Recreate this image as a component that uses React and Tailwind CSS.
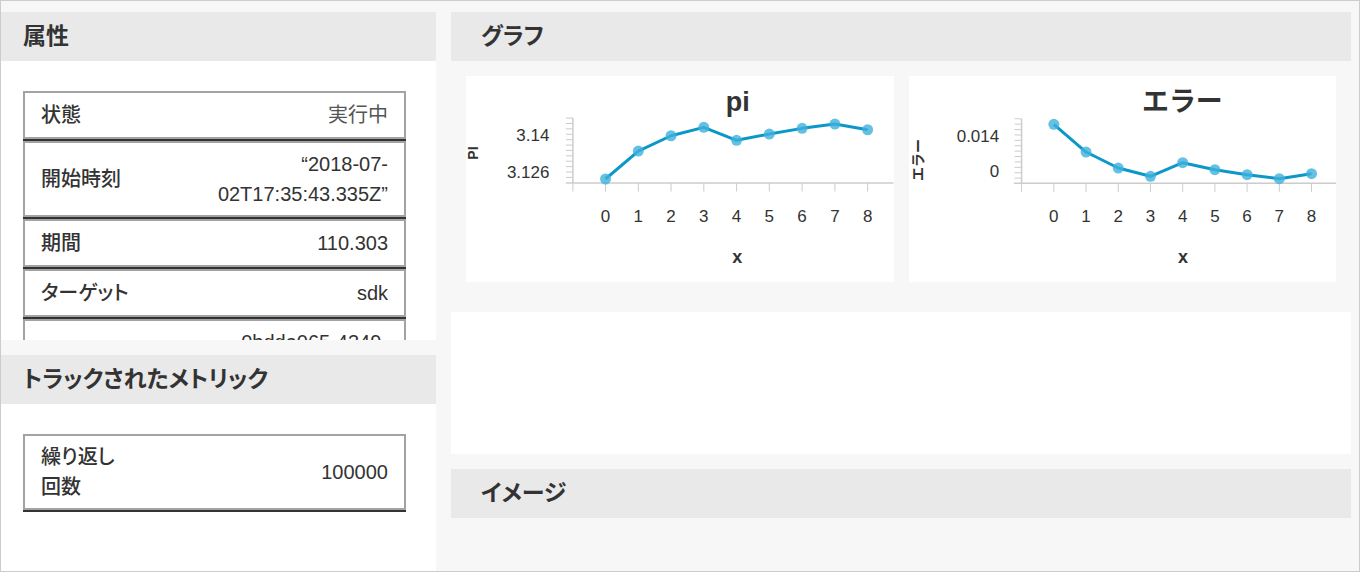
const piChart = {
  title: "pi",
  yLabel: "PI",
  axisX: 107,
  top: 42,
  bottom: 107,
  xStart: 100,
  x0: 139.7,
  step: 32.8,
  ys: [103, 75, 59.7, 51.3, 64.3, 58, 52.3, 48, 53.7],
  yTicks: [
    { label: "3.14", y: 59 },
    { label: "3.126", y: 96.3 },
  ],
  labelRight: 83.5,
  titleX: 272,
  yLabelX: 7,
  yLabelY: 77,
};

const errorChart = {
  title: "エラー",
  yLabel: "エラー",
  axisX: 112.7,
  top: 42.7,
  bottom: 107.3,
  xStart: 105,
  x0: 145,
  step: 32.25,
  ys: [48.3, 76, 92, 100.3, 86.7, 93.7, 98.7, 102.7, 97.7],
  yTicks: [
    { label: "0.014", y: 60 },
    { label: "0", y: 95.7 },
  ],
  labelRight: 90.3,
  titleX: 273.7,
  yLabelX: 9,
  yLabelY: 84,
};

function Chart({ cfg }) {
  const xs = cfg.ys.map((_, i) => cfg.x0 + cfg.step * i);
  const minor = [];
  for (let y = cfg.top; y < cfg.bottom - 2; y += 5.4) minor.push(y);
  const linePts = cfg.ys.map((y, i) => `${xs[i]},${y}`).join(" ");

  return (
    <div className="bg-white h-[206px]">
      <svg width="100%" height="206" viewBox="0 0 428 206" className="block">
        <text x={cfg.titleX} y="26" textAnchor="middle" dominantBaseline="central" fontSize="27" fontWeight="700" fill="#333">
          {cfg.title}
        </text>

        {/* axes */}
        <line x1={cfg.axisX} y1={cfg.top} x2={cfg.axisX} y2={cfg.bottom} stroke="#ccc" strokeWidth="1.5" />
        <line x1={cfg.xStart} y1={cfg.bottom} x2="428" y2={cfg.bottom} stroke="#ccc" strokeWidth="1.5" />
        {minor.map((y) => (
          <line key={y} x1={cfg.axisX - 7} y1={y} x2={cfg.axisX} y2={y} stroke="#ccc" strokeWidth="1" />
        ))}
        {[cfg.axisX, ...xs].map((x) => (
          <line key={x} x1={x} y1={cfg.bottom} x2={x} y2={cfg.bottom + 8.5} stroke="#ccc" strokeWidth="1" />
        ))}

        {/* labels */}
        {cfg.yTicks.map((t) => (
          <text key={t.label} x={cfg.labelRight} y={t.y} textAnchor="end" dominantBaseline="central" fontSize="17" fill="#333">
            {t.label}
          </text>
        ))}
        {xs.map((x, i) => (
          <text key={i} x={x} y="141" textAnchor="middle" dominantBaseline="central" fontSize="17" fill="#333">
            {i}
          </text>
        ))}
        <text x={(cfg.axisX + 428) / 2 + 4} y="181" textAnchor="middle" dominantBaseline="central" fontSize="18" fontWeight="700" fill="#333">
          x
        </text>
        <text
          x={cfg.yLabelX}
          y={cfg.yLabelY}
          textAnchor="middle"
          dominantBaseline="central"
          fontSize="14"
          fontWeight="700"
          fill="#333"
          transform={`rotate(-90 ${cfg.yLabelX} ${cfg.yLabelY})`}
        >
          {cfg.yLabel}
        </text>

        {/* data */}
        <polyline points={linePts} fill="none" stroke="#0b98c9" strokeWidth="3" strokeLinejoin="round" />
        {cfg.ys.map((y, i) => (
          <circle key={i} cx={xs[i]} cy={y} r="5.5" fill="#3fb1dd" fillOpacity="0.8" />
        ))}
      </svg>
    </div>
  );
}

function SectionHeader({ children, left }) {
  return (
    <div className={`h-[49px] shrink-0 bg-[#e9e9e9] flex items-center ${left ? "pl-[22px]" : "pl-[30px]"}`}>
      <h2 className="text-[23px] font-bold text-[#333] [font-feature-settings:'palt']">{children}</h2>
    </div>
  );
}

function Row({ k, v }) {
  return (
    <div className="border-b-2 border-[#333]">
      <div className="border-2 border-[#a3a3a3] min-h-[48px] px-[16px] py-[6px] flex items-center justify-between text-[20px] leading-[30px] text-[#333]">
        <div className="font-medium [font-feature-settings:'palt']">{k}</div>
        <div className="text-right">{v}</div>
      </div>
    </div>
  );
}

export default function App() {
  return (
    <div className="w-[1360px] h-[572px] border border-[#ccc] bg-[#f7f7f7] overflow-hidden flex font-['Liberation_Sans','Noto_Sans_CJK_JP',sans-serif]">
      {/* left column */}
      <div className="w-[435px] shrink-0 flex flex-col pt-[11px]">
        <div className="h-[328px] bg-white overflow-hidden flex flex-col">
          <SectionHeader left>属性</SectionHeader>
          <div className="pt-[30px] pl-[22px]">
            <div className="w-[383px]">
              <Row k="状態" v={<span className="text-[#555]">実行中</span>} />
              <Row
                k="開始時刻"
                v={
                  <>
                    “2018-07-
                    <br />
                    02T17:35:43.335Z”
                  </>
                }
              />
              <Row k="期間" v="110.303" />
              <Row k="ターゲット" v="sdk" />
              <Row
                k="実行 ID"
                v={
                  <>
                    0bdda065-4349-
                    <br />
                    a0f1-87b3c1d5e2f4
                  </>
                }
              />
            </div>
          </div>
        </div>

        <div className="mt-[15px] flex-1 bg-white flex flex-col">
          <SectionHeader left>トラックされたメトリック</SectionHeader>
          <div className="pt-[30px] pl-[22px]">
            <div className="w-[383px]">
              <Row
                k={
                  <>
                    繰り返し
                    <br />
                    回数
                  </>
                }
                v="100000"
              />
            </div>
          </div>
        </div>
      </div>

      {/* right column */}
      <div className="w-[900px] ml-[15px] pt-[11px] flex flex-col">
        <SectionHeader>グラフ</SectionHeader>
        <div className="grid grid-cols-2 gap-[15px] px-[15px] pt-[15px]">
          <Chart cfg={piChart} />
          <Chart cfg={errorChart} />
        </div>
        <div className="mt-[30px] h-[142px] bg-white" />
        <div className="mt-[15px]">
          <SectionHeader>イメージ</SectionHeader>
        </div>
      </div>
    </div>
  );
}
